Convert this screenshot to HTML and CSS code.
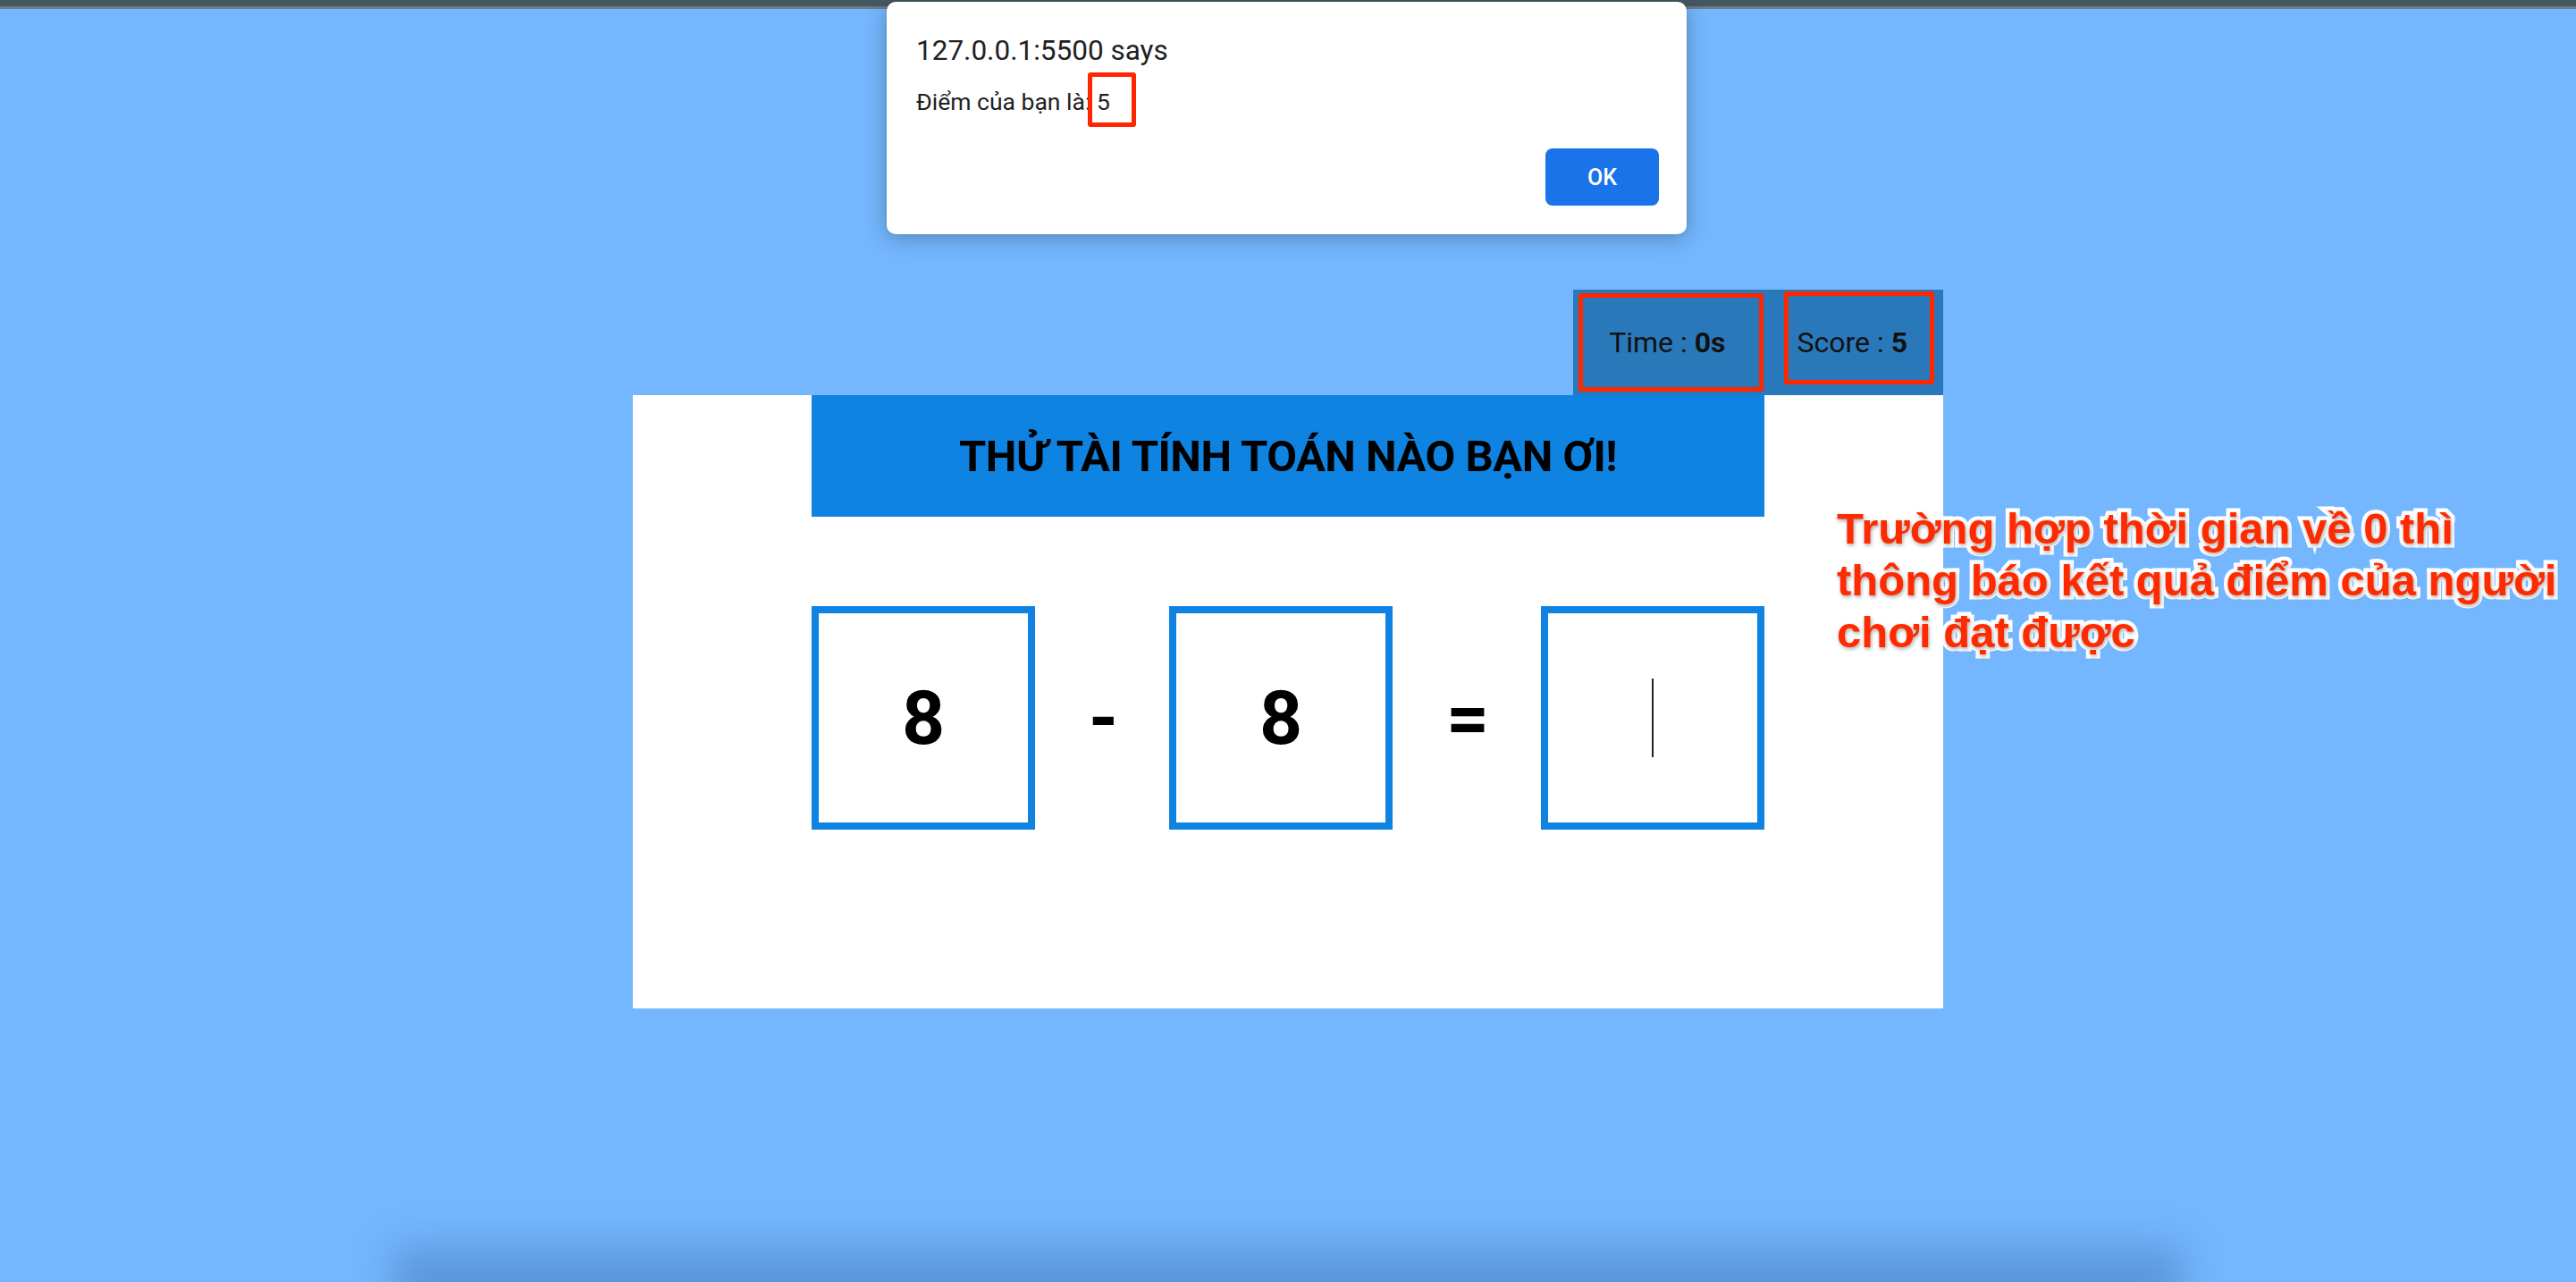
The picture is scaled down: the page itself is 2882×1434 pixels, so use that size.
FILE: index.html
```html
<!DOCTYPE html>
<html lang="vi">
<head>
<meta charset="utf-8">
<title>Thử tài tính toán</title>
<link rel="stylesheet" href="styles.css">
</head>
<body>
  <div class="chrome"></div>
  <main class="page">
    <div class="game">
      <div class="stats">
        <div class="stats-bar">
          <div class="stat">Time : <b>0s</b></div>
          <div class="stat">Score : <b>5</b></div>
          <span class="mark mark-time"></span>
          <span class="mark mark-score"></span>
        </div>
      </div>
      <section class="card">
        <h1 class="title">THỬ TÀI TÍNH TOÁN NÀO BẠN ƠI!</h1>
        <div class="equation">
          <div class="box">8</div>
          <span class="op op-minus">-</span>
          <div class="box">8</div>
          <span class="op op-eq">=</span>
          <div class="box box-input"><span class="caret"></span></div>
        </div>
      </section>
      <p class="note">Trường hợp thời gian về 0 thì<br>thông báo kết quả điểm của người<br>chơi đạt được</p>
    </div>
  </main>
  <div class="dock-shadow"></div>
  <div class="dialog">
    <div class="dialog-title">127.0.0.1:5500 says</div>
    <div class="dialog-msg">Điểm của bạn là: <span class="score-num">5<span class="mark mark-num"></span></span></div>
    <div class="dialog-actions"><button class="ok">OK</button></div>
  </div>
</body>
</html>
```

FILE: styles.css
```css
html, body {
  margin: 0;
  padding: 0;
}
body {
  position: relative;
  width: 2882px;
  height: 1434px;
  overflow: hidden;
  background: #74b7fe;
  font-family: Roboto, "Noto Sans", Arial, sans-serif;
  color: #000;
}
.chrome {
  height: 7px;
  background: #455862;
  border-bottom: 3px solid #6c7b84;
}
.page {
  padding-top: 314px;
}
.game {
  position: relative;
  width: 1466px;
  margin: 0 auto;
}
.stats {
  display: flex;
  justify-content: flex-end;
}
.stats-bar {
  position: relative;
  display: flex;
  align-items: center;
  height: 118px;
  background: #2979ba;
}
.stat {
  padding: 0 40px;
  font-size: 32px;
  color: #111;
}
.stat b {
  font-weight: 700;
}
.mark {
  position: absolute;
  border: 5px solid #ff2600;
  border-radius: 3px;
  box-sizing: border-box;
}
.mark-time {
  left: 6px;
  top: 4px;
  width: 207px;
  height: 110px;
}
.mark-score {
  left: 236px;
  top: 2px;
  width: 168px;
  height: 104px;
}
.card {
  background: #fff;
  padding-bottom: 200px;
}
.title {
  width: 1066px;
  height: 136px;
  margin: 0 auto;
  display: flex;
  align-items: center;
  justify-content: center;
  background: #0e83e1;
  font-size: 49px;
  font-weight: 700;
  letter-spacing: -0.5px;
  color: #000;
}
.equation {
  width: 1066px;
  margin: 100px auto 0;
  display: flex;
  justify-content: space-between;
  align-items: center;
}
.box {
  width: 250px;
  height: 250px;
  box-sizing: border-box;
  border: 8px solid #0e83e1;
  display: flex;
  align-items: center;
  justify-content: center;
  font-size: 84px;
  font-weight: 700;
}
.op {
  font-size: 84px;
  font-weight: 700;
  text-align: center;
}
.op-minus { width: 30px; }
.op-eq { width: 46px; }
.caret {
  display: block;
  width: 2px;
  height: 88px;
  background: #222;
}
.note {
  position: absolute;
  left: 1347px;
  top: 238px;
  margin: 0;
  white-space: nowrap;
  font-family: "Liberation Sans", Arial, sans-serif;
  font-weight: 700;
  font-size: 49px;
  line-height: 58px;
  color: #ff2a00;
  -webkit-text-stroke: 9px #fff;
  paint-order: stroke fill;
  text-shadow: 1px 2px 4px rgba(0, 0, 0, 0.35);
}
.dock-shadow {
  position: absolute;
  left: 440px;
  right: 440px;
  bottom: -50px;
  height: 90px;
  background: rgba(30, 70, 130, 0.28);
  filter: blur(22px);
}
.dialog {
  position: absolute;
  left: 992px;
  top: 2px;
  width: 895px;
  height: 260px;
  box-sizing: border-box;
  padding: 37px 31px 32px 33px;
  background: #fff;
  border-radius: 10px;
  box-shadow: 0 4px 24px rgba(0, 0, 0, 0.28), 0 0 2px rgba(0, 0, 0, 0.2);
  color: #202124;
}
.dialog-title {
  font-size: 31.5px;
  line-height: 36px;
}
.dialog-msg {
  margin-top: 23px;
  font-size: 26.5px;
  line-height: 32px;
}
.score-num {
  position: relative;
}
.mark-num {
  left: -10px;
  top: -17px;
  width: 54px;
  height: 61px;
}
.dialog-actions {
  margin-top: 36px;
  display: flex;
  justify-content: flex-end;
}
.ok {
  width: 127px;
  height: 64px;
  border: 0;
  border-radius: 8px;
  background: #1a73e8;
  color: #fff;
  font-family: Roboto, Arial, sans-serif;
  font-size: 25px;
  font-weight: 500;
}
```
